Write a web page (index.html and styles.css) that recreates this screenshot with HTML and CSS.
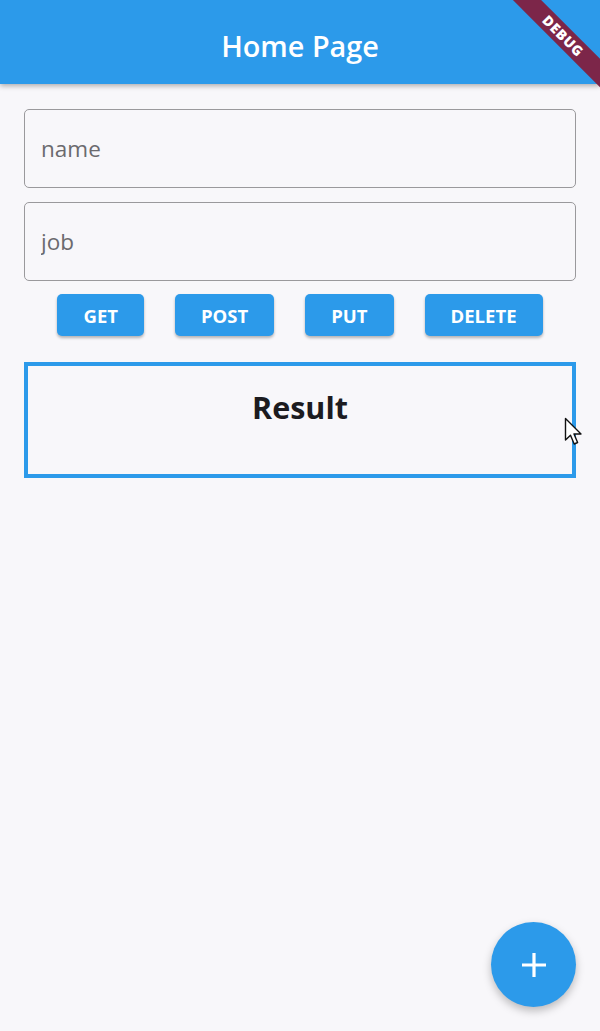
FILE: index.html
```html
<!DOCTYPE html>
<html lang="en">
<head>
<meta charset="utf-8">
<title>Home Page</title>
<link rel="stylesheet" href="styles.css">
</head>
<body>
<div class="app">
  <header class="appbar">
    <h1 class="appbar-title">Home Page</h1>
  </header>
  <div class="debug-banner">DEBUG</div>
  <main class="content">
    <div class="field"><input class="field-input" type="text" placeholder="name"></div>
    <div class="field"><input class="field-input" type="text" placeholder="job"></div>
    <div class="actions">
      <button class="btn">GET</button>
      <button class="btn">POST</button>
      <button class="btn">PUT</button>
      <button class="btn">DELETE</button>
    </div>
    <section class="result">
      <h2 class="result-title">Result</h2>
    </section>
  </main>
  <button class="fab" aria-label="Add">
    <svg width="26" height="26" viewBox="0 0 26 26"><path d="M13 1v24M1 13h24" stroke="#fff" stroke-width="3.2" fill="none"/></svg>
  </button>
  <svg class="cursor" width="20" height="30" viewBox="0 0 20 30">
    <path d="M1.5 1.5 L1.5 23 L6.5 18.2 L10.2 27 L13.6 25.5 L10 17 L17 17 Z" fill="#fff" stroke="#111" stroke-width="1.4" stroke-linejoin="round"/>
  </svg>
</div>
</body>
</html>
```
FILE: styles.css
```css
* { box-sizing: border-box; }
html, body {
  margin: 0;
  padding: 0;
  height: 100%;
}
body {
  background: #f8f7fa;
  font-family: "Open Sans", "Noto Sans", sans-serif;
}
.app {
  position: relative;
  width: 600px;
  height: 1031px;
  overflow: hidden;
  background: #f8f7fa;
}
.appbar {
  height: 84px;
  background: #2c9aea;
  display: flex;
  align-items: center;
  justify-content: center;
  box-shadow: 0 2px 5px rgba(0,0,0,0.3);
  position: relative;
  z-index: 1;
}
.appbar-title {
  margin: 0;
  color: #fff;
  font-size: 28.8px;
  font-weight: 600;
  padding-top: 6px;
}
.debug-banner {
  position: absolute;
  top: 26px;
  left: 492px;
  width: 142px;
  height: 20px;
  background: #7c2649;
  color: #fff;
  font-family: "Open Sans", sans-serif;
  font-weight: 800;
  font-size: 14px;
  letter-spacing: 0.6px;
  line-height: 20px;
  text-align: center;
  transform: rotate(45deg);
  z-index: 2;
}
.content {
  padding: 25px 24px 0;
  display: flex;
  flex-direction: column;
}
.field {
  height: 79px;
  margin-bottom: 14px;
}
.field + .field { margin-bottom: 13px; }
.field-input {
  width: 100%;
  height: 100%;
  border: 1.5px solid #9a999c;
  border-radius: 5px;
  background: transparent;
  padding: 0 16px;
  font-family: "Open Sans", sans-serif;
  font-size: 22.5px;
  color: #333;
  outline: none;
}
.field-input::placeholder { color: #6b6a6e; }
.actions {
  display: flex;
  justify-content: center;
  gap: 31px;
  height: 42px;
}
.btn {
  background: #2c9aea;
  color: #fff;
  border: none;
  border-radius: 5px;
  padding: 0 26px;
  font-family: "Open Sans", sans-serif;
  font-weight: 700;
  font-size: 18.5px;
  box-shadow: 0 2px 3px rgba(0,0,0,0.28);
}
.result {
  margin-top: 26px;
  height: 116px;
  border: 4px solid #2c9aea;
  display: flex;
  justify-content: center;
}
.result-title {
  margin: 0;
  padding-top: 21px;
  font-size: 30.5px;
  font-weight: 700;
  color: #1c1b1f;
  line-height: 40px;
}
.fab {
  position: absolute;
  right: 24px;
  bottom: 24px;
  width: 85px;
  height: 85px;
  border-radius: 50%;
  border: none;
  background: #2c9aea;
  box-shadow: 0 4px 8px rgba(0,0,0,0.25);
  display: flex;
  align-items: center;
  justify-content: center;
  padding: 0;
}
.cursor {
  position: absolute;
  left: 564px;
  top: 417px;
  z-index: 3;
}
```
